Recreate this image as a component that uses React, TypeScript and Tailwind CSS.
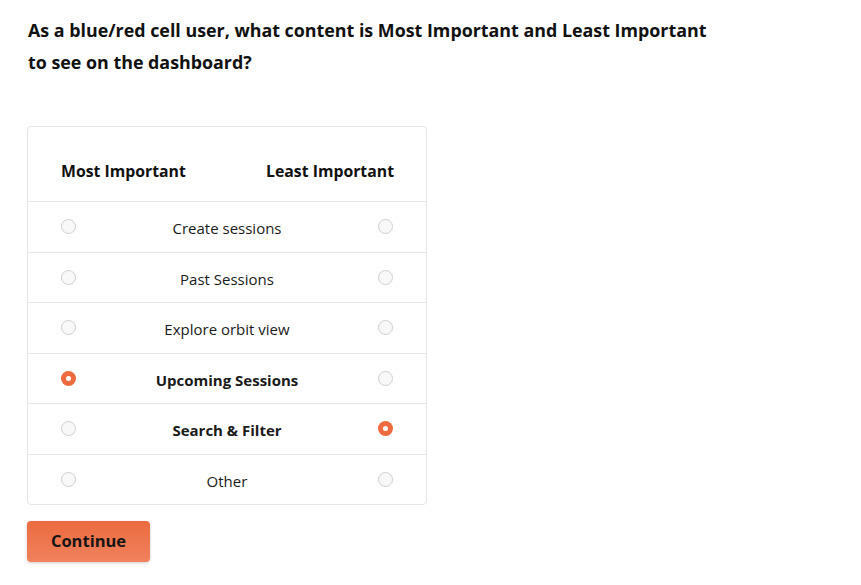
import React, { useState } from 'react';

const items = [
  'Create sessions',
  'Past Sessions',
  'Explore orbit view',
  'Upcoming Sessions',
  'Search & Filter',
  'Other',
];

const Radio: React.FC<{ checked: boolean; onClick: () => void }> = ({ checked, onClick }) => (
  <button
    onClick={onClick}
    className={
      checked
        ? 'w-[15px] h-[15px] rounded-full bg-[#ee6a3f] flex items-center justify-center shrink-0'
        : 'w-[15px] h-[15px] rounded-full border border-[#cfcfcf] bg-[#f8f8f8] shrink-0'
    }
  >
    {checked && <span className="w-[5px] h-[5px] rounded-full bg-white" />}
  </button>
);

export default function App() {
  const [most, setMost] = useState(3);
  const [least, setLeast] = useState(4);

  return (
    <div className="min-h-screen bg-white pl-[28px] pt-[14px] font-['Open_Sans','Lato',sans-serif] text-[#111]">
      {/* Question */}
      <h1 className="text-[17.85px] font-bold leading-[32px] max-w-[720px]">
        As a blue/red cell user, what content is Most Important and Least Important
        <br />
        to see on the dashboard?
      </h1>

      {/* Ranking table */}
      <div className="mt-[48px] -ml-px w-[400px] border border-[#e6e6e6] rounded-[4px]">
        <div className="flex justify-between items-center pl-[33px] pr-[32px] pt-[33px] pb-[19px] text-[15.8px] font-bold leading-[22px]">
          <span>Most Important</span>
          <span>Least Important</span>
        </div>
        {items.map((label, i) => {
          const bold = most === i || least === i;
          return (
            <div
              key={label}
              className="flex items-center justify-between h-[50.5px] border-t border-[#e6e6e6] pl-[33px] pr-[33px]"
            >
              <Radio checked={most === i} onClick={() => setMost(i)} />
              <span
                className={`pt-[3px] text-[15px] text-[#1a1a1a] ${bold ? 'font-bold' : 'font-normal'}`}
              >
                {label}
              </span>
              <Radio checked={least === i} onClick={() => setLeast(i)} />
            </div>
          );
        })}
      </div>

      {/* Continue */}
      <button className="mt-[16px] -ml-px w-[123px] h-[41px] rounded-[4px] bg-gradient-to-b from-[#ec6a40] to-[#f0825c] shadow-[0_1px_3px_rgba(0,0,0,0.2)] text-[16.5px] font-bold text-[#151515]">
        Continue
      </button>
    </div>
  );
}
